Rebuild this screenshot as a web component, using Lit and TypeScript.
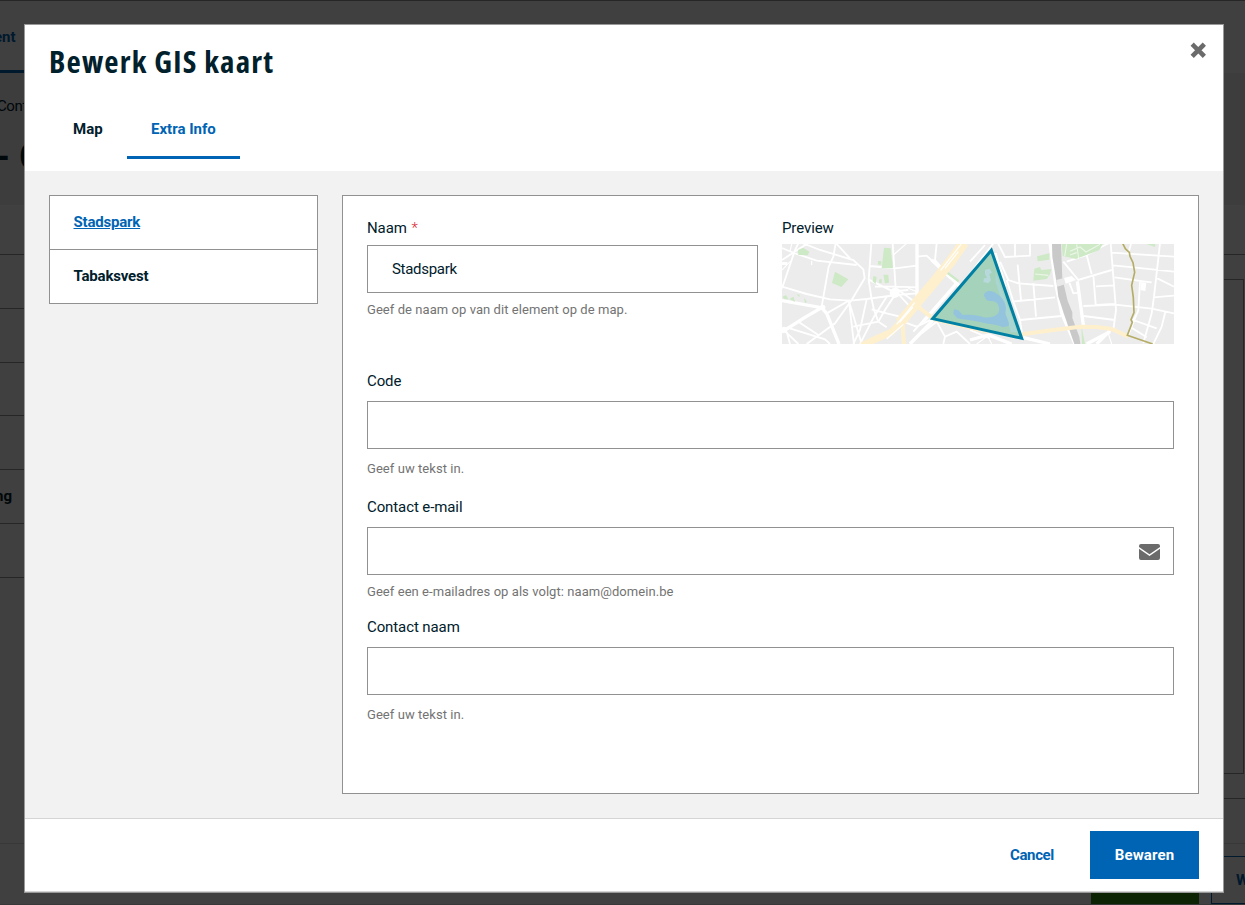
import { LitElement, html, css, svg } from "lit";
import { customElement, property } from "lit/decorators.js";

@customElement("map-preview")
class MapPreview extends LitElement {
  static styles = css`
    :host { display: block; width: 392px; height: 100px; }
    svg { display: block; }
    .road { fill: none; stroke: #fff; stroke-width: 5.5; }
    .wide { stroke-width: 10; }
    .thin { stroke-width: 3.5; }
    .park { fill: #cee9c6; }
    .main { fill: none; stroke: #fff0cd; }
  `;
  private west() {
    return svg`
      <path class="road" d="M36 114 L80 132 L140 152 L260 165 M100 100 L150 120 L250 150 L280 178 L284 205 L245 270 M36 150 L110 102 M36 235 L75 120 L85 100 M197 100 L190 140 L176 170 L155 290 M36 230 L110 252 L180 268 L240 272 L290 267 L380 255 L440 250 M200 102 L240 145 M304 100 L296 210 L304 262 L312 300 L325 335 L350 352 M368 100 L378 250 M295 208 L370 245 M300 168 L375 175 L440 167 M315 230 L378 230 L440 232"/>
      <path class="road wide" d="M36 272 L155 293 L170 310 L207 402 M441 100 L441 285 M155 293 L100 325 L36 366 M485 150 L545 205 L575 235 M490 330 L420 402 M560 220 L460 335"/>
      <path class="road" d="M36 355 L85 402 M50 365 L60 402 M50 352 L165 388 L180 402 M85 335 L145 375 M245 270 L195 340 L110 402 M170 310 L240 270 M237 275 L252 402 M237 275 L245 300 L275 402 M290 268 L270 360 L250 402 M350 260 L312 320 L270 402 M305 298 L350 310 L390 320 M325 335 L250 350 M378 250 L345 300 L325 335 M385 252 L420 290 M378 235 L440 280 M360 245 L415 240 M440 140 L470 137 L540 205 M500 100 L495 150 L530 190 M560 220 L430 365 M575 235 L620 165 L670 100 M600 155 L645 105 M455 370 L500 335 L525 380 L560 365 L600 402 M525 380 L520 402 M600 360 L660 385 M385 330 L440 350 L490 326"/>
      <path class="road thin" d="M125 152 V165 M65 102 L60 125 M105 102 L90 122 M36 180 L60 155 M410 100 L370 135 M415 235 L440 245"/>
      <path class="main" stroke-width="31" d="M582 98 L540 157 L500 207 L440 278 L390 338"/>
      <path class="main" stroke-width="20" d="M400 328 L365 366 L320 386 L275 407"/>
      <path class="main" stroke-width="12" d="M397 330 L402 404 M438 275 L450 295 L490 326"/>
      <path class="main" stroke-width="4" d="M490 332 L660 371"/>
      <path class="road thin" d="M573 103 L512 181 M565 125 L525 175 M434 278 L380 343 M429 291 L389 337 M400 343 L350 387"/>
      <path class="park" d="M84 120 L99 113 L118 125 L113 136 L85 135Z M195 185 L235 208 L214 231 L186 219Z M342 113 L362 115 L369 175 L335 175Z M324 153 H334 V164 H324Z M310 198 L320 201 L317 222 L308 214Z M340 194 L355 194 L357 218 L345 220Z M327 209 L335 206 V219 L328 219Z M535 186 L568 211 L564 217 L531 192Z M38 260 L48 255 L55 268 L42 267Z M58 267 L71 260 L75 276Z M80 253 L89 254 L88 262Z M102 263 L111 276 L105 279Z"/>
      <circle fill="#fff" cx="374" cy="249" r="15"/><circle fill="#fff" cx="158" cy="292" r="8"/><circle fill="#fff" cx="42" cy="359" r="9"/><rect fill="#fff" x="36" y="156" width="16" height="9"/>
    `;
  }
  private east() {
    return svg`
      <path class="road" d="M84 100 L105 141 L182 137 M135 100 V138 M180 100 V137 M90 155 L115 210 L145 220 L250 228 M143 164 L153 270 M190 220 L198 320 M125 275 L255 262 M150 330 L275 318 M110 210 L130 275 L150 330 L158 384 M290 155 L350 135 L405 105 L415 100 M350 135 L365 193 M280 155 L325 210 L425 180 M298 218 L310 250 L330 247 M370 195 L377 284 M378 229 L432 226 M378 285 L435 282 M422 100 L438 300 L430 360 M425 128 L612 140 M428 166 L490 172 L612 185 M434 202 L520 214 L545 217 M570 100 L552 260 L545 310 L520 400 M340 288 L435 284 L545 296 L612 310 M340 318 L435 330 M510 216 L505 300 L475 375 M550 262 L612 257 M558 203 L612 230 M586 305 L575 350 L550 402 M505 303 L490 330 L560 355 M480 350 L530 382 M483 102 L475 130"/>
      <path class="road wide" d="M240 100 L258 225 L275 310 L315 402 M322 214 L340 345 M420 365 L350 402 M380 402 L420 362 M158 382 L240 402 M0 390 L55 375 L125 402 M75 130 L105 230"/>
      <path class="road thin" d="M20 402 L60 373 M50 373 L65 402 M415 370 L425 402"/>
      <path class="park" d="M275 102 L398 102 L388 120 L318 147 L278 138Z M201 139 L238 130 V149 L203 154Z M193 176 L210 171 L214 180 L244 177 L240 193 L230 207 L190 212Z M527 101 L556 101 L555 111Z M334 345 L345 402 L336 402Z"/>
      <path class="road thin" stroke-opacity=".6" d="M290 102 L284 138 M300 124 L330 111 L348 126 L390 103 M300 135 L320 128 M320 103 L326 145 M195 192 L235 196"/>
      <path fill="#c9c9c9" d="M246 100 L273 100 L277 205 L293 273 L307 307 L307 324 L328 380 L331 402 L313 402 L295 350 L265 260 L260 220 L247 140Z"/>
      <path fill="#e9e9e9" d="M259 210 L284 203 L287 222 L262 230Z"/>
      <path fill="#fff" d="M282 204 L305 198 L318 210 L287 221Z M514 216 L529 219 L526 243 L511 240Z"/>
      <path class="main" stroke-width="12" d="M155 373 L250 360 L330 350 L380 351 L425 357 L475 380"/>
      <path fill="none" stroke="#b5ad67" stroke-width="5" d="M458 100 L466 116 L478 127 L480 139 L489 158 L494 187 L485 226 L490 263 L492 308 L483 329 L487 337 L472 376 L548 402"/>
      <path fill="#a4d2bb" stroke="#0080a3" stroke-width="9" d="M64 121 L155 385 L-112 326Z"/>
      <path fill="#a9d6d3" d="M76 185 L142 367 L122 367 L107 310 L77 216Z"/>
      <path fill="#94c3de" d="M42 257 C43 240 67 239 80 251 C99 262 113 285 106 307 C105 320 121 335 116 348 L97 352 C85 342 59 345 34 337 C10 331 -17 329 -38 325 L-50 311 L-48 298 L-35 301 L-22 315 C5 313 23 315 40 322 C70 326 92 315 87 292 C83 270 68 276 50 271Z"/>
      <path fill="#b7d9db" d="M45 179 L59 176 L66 188 L58 192 L63 211 L55 220 L40 216 L42 205 L51 203 L45 192Z"/>
    `;
  }
  render() {
    return html`<svg width="392" height="100" viewBox="0 0 392 100">
      <rect width="392" height="100" fill="#ececec" />
      <g transform="translate(-12 -34) scale(.33333)">${this.west()}</g>
      <g transform="translate(188 -34) scale(.33333)">${this.east()}</g>
    </svg>`;
  }
}

@customElement("form-field")
class FormField extends LitElement {
  @property() label = "";
  @property() value = "";
  @property() help = "";
  @property({ type: Boolean }) required = false;
  @property({ type: Boolean }) mail = false;
  static styles = css`
    :host { display: block; font-family: Roboto, "Noto Sans", sans-serif; color: #00202c; }
    .label { display: block; height: 24px; line-height: 24px; font-size: 15px; letter-spacing: -.1px; }
    .req { color: #d8262e; margin-left: 1px; font-weight: 300; }
    .box { display: flex; align-items: center; box-sizing: border-box; height: 48px; margin-top: var(--gap, 8px); padding: 0 13px 0 24px; border: 1px solid #919191; background: #fff; }
    input { flex: 1; min-width: 0; border: 0; outline: 0; padding: 0 0 1px; background: none; font: inherit; font-size: 15px; letter-spacing: -.3px; color: inherit; }
    svg { position: relative; top: 1px; }
    .help { height: 20px; line-height: 20px; margin-top: var(--help-gap, 10px); font-size: 13px; letter-spacing: .06px; color: #737373; }
  `;
  render() {
    return html`<label class="label">${this.label} ${this.required ? html`<span class="req">*</span>` : ""}</label>
      <div class="box"><input .value=${this.value} />${this.mail ? html`<svg width="21" height="16" viewBox="0 0 21 16"><path fill="#6b6b6b" d="M2 0H19Q21 0 21 2V3L10.500 10.200L0 3V2Q0 0 2 0ZM0 4.800L10.500 12L21 4.800V14Q21 16 19 16H2Q0 16 0 14Z"/></svg>` : ""}</div>
      <div class="help">${this.help}</div>`;
  }
}

@customElement("app-root")
class AppRoot extends LitElement {
  static styles = css`
    :host { display: block; position: relative; width: 1245px; height: 905px; overflow: hidden; font-family: Roboto, "Noto Sans", sans-serif; font-size: 15px; color: #00202c; }
    * { box-sizing: border-box; }
    .page { height: 905px; background: #fff; display: flex; flex-direction: column; }
    .nav { height: 73px; border-top: 1px solid #999; }
    .nav span { display: block; width: 60px; height: 72px; line-height: 73px; color: #0064b4; border-bottom: 3px solid #0064b4; font-weight: 700; text-indent: -6px; }
    .hero { height: 132px; background: #f2f2f2; padding-top: 21px; }
    .crumb { line-height: 24px; height: 24px; text-indent: -3px; letter-spacing: -.4px; }
    .big { font-size: 38px; line-height: 54px; height: 54px; margin-top: 12px; font-weight: 700; display: flex; }
    .dash { width: 19px; text-indent: -5px; }
    .cols { display: flex; justify-content: space-between; height: 640px; }
    .menu { width: 60px; padding-top: 49px; }
    .menu div { height: 53.850px; border-top: 1px solid #999; line-height: 53px; font-weight: 700; text-indent: -5px; }
    .side { width: 60px; padding-top: 49px; }
    .pane { border-top: 1px solid #999; height: 545px; padding-top: 24px; border-bottom: 1px solid #999; }
    .pane div { height: 495px; margin-right: 1px; border: 1px solid #999; border-left: 0; }
    .bar { flex: 1; margin-top: -1px; border-top: 1px solid #ddd; display: flex; justify-content: flex-end; padding-top: 12px; gap: 12px; border-bottom: 1px solid #ddd; }
    .save { width: 108px; background: #318f10; }
    .out { width: 90px; border: 1px solid #0064b4; margin-right: -56px; color: #0064b4; font-weight: 700; line-height: 46px; padding-left: 24px; }
    .shade { position: absolute; inset: 0; background: rgba(0, 0, 0, .75); padding: 24px 21px 12px 24px; }
    .modal { width: 1200px; height: 869px; border: 1px solid #999; background: #fff; display: flex; flex-direction: column; }
    .head { height: 146px; flex: none; }
    .title { display: flex; justify-content: space-between; height: 80px; padding: 0 17px 0 24px; }
    h1 { margin: 13px 0 0; font-family: "Open Sans", sans-serif; font-stretch: 75%; font-size: 31px; line-height: 46px; height: 46px; font-weight: 700; letter-spacing: 1.200px; }
    .close { margin-top: 17px; }
    .tabs { display: flex; padding-left: 24px; }
    .tab { height: 54px; line-height: 49px; padding: 0 24px; font-weight: 700; border-bottom: 3px solid transparent; }
    .tab.w1 { width: 78px; } .tab.w2 { width: 113px; color: #0064b4; border-color: #0064b4; }
    .body { flex: 1; background: #f2f2f2; padding: 24px; display: flex; gap: 24px; align-items: flex-start; }
    .list { width: 269px; border: 1px solid #919191; background: #fff; font-weight: 700; letter-spacing: -.2px; }
    .item { height: 53px; line-height: 52px; padding-left: 23.500px; }
    .item + .item { height: 54px; border-top: 1px solid #919191; }
    .on { color: #0064b4; text-decoration: underline; }
    .card { width: 857px; height: 599px; border: 1px solid #919191; background: #fff; padding: 20px 24px; }
    .top { display: flex; gap: 24px; height: 153px; }
    .name { width: 391px; --gap: 5px; --help-gap: 7px; }
    .plabel { line-height: 24px; height: 24px; margin-bottom: 4px; letter-spacing: -.1px; }
    .code { height: 126px; }
    .email { height: 120px; --help-gap: 7px; }
    .foot { flex: none; height: 74px; border-top: 1px solid #d5d5d5; border-bottom: 1px solid #d5d5d5; display: flex; justify-content: flex-end; align-items: center; padding-right: 24px; gap: 36px; font-weight: 700; }
    .cancel { color: #0064b4; letter-spacing: -.35px; }
    .ok { background: #0064b4; color: #fff; width: 109px; height: 48px; line-height: 48px; text-align: center; letter-spacing: .15px; }
  `;
  render() {
    return html`
      <div class="page">
        <div class="nav"><span>ent</span></div>
        <div class="hero"><div class="crumb">Content</div><div class="big"><span class="dash">-</span><span>G</span></div></div>
        <div class="cols">
          <div class="menu">${["", "", "", "", "ng", "", ""].map((t) => html`<div>${t}</div>`)}</div>
          <div class="side"><div class="pane"><div></div></div></div>
        </div>
        <div class="bar"><div class="save"></div><div class="out">W</div></div>
      </div>
      <div class="shade">
        <div class="modal">
          <div class="head">
            <div class="title"><h1>Bewerk GIS kaart</h1>
              <svg class="close" width="16" height="16" viewBox="0 0 16 16"><path d="M3.800 3.800L12.700 12.700M12.700 3.800L3.800 12.700" stroke="#6b6b6b" stroke-width="4.600" stroke-linecap="square"/></svg>
            </div>
            <div class="tabs"><div class="tab w1">Map</div><div class="tab w2">Extra&nbsp;Info</div></div>
          </div>
          <div class="body">
            <div class="list"><div class="item on">Stadspark</div><div class="item">Tabaksvest</div></div>
            <div class="card">
              <div class="top">
                <form-field class="name" label="Naam" value="Stadspark" required help="Geef de naam op van dit element op de map."></form-field>
                <div><div class="plabel">Preview</div><map-preview></map-preview></div>
              </div>
              <form-field class="code" label="Code" help="Geef uw tekst in."></form-field>
              <form-field class="email" label="Contact e-mail" mail help="Geef een e-mailadres op als volgt: naam@domein.be"></form-field>
              <form-field label="Contact naam" help="Geef uw tekst in."></form-field>
            </div>
          </div>
          <div class="foot"><span class="cancel">Cancel</span><div class="ok">Bewaren</div></div>
        </div>
      </div>`;
  }
}
